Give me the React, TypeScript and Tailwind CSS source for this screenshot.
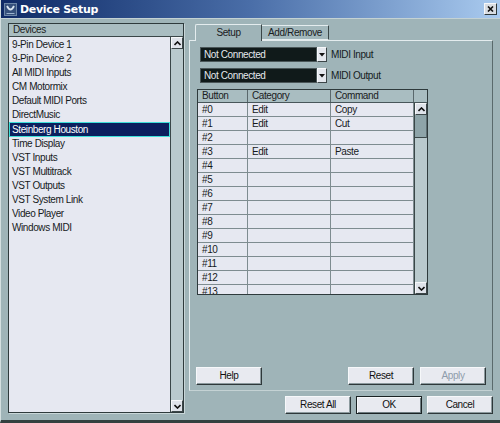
import React from 'react'

const DEVICES = [
  '9-Pin Device 1',
  '9-Pin Device 2',
  'All MIDI Inputs',
  'CM Motormix',
  'Default MIDI Ports',
  'DirectMusic',
  'Steinberg Houston',
  'Time Display',
  'VST Inputs',
  'VST Multitrack',
  'VST Outputs',
  'VST System Link',
  'Video Player',
  'Windows MIDI',
]

const ROWS: [string, string, string][] = [
  ['#0', 'Edit', 'Copy'],
  ['#1', 'Edit', 'Cut'],
  ['#2', '', ''],
  ['#3', 'Edit', 'Paste'],
  ['#4', '', ''],
  ['#5', '', ''],
  ['#6', '', ''],
  ['#7', '', ''],
  ['#8', '', ''],
  ['#9', '', ''],
  ['#10', '', ''],
  ['#11', '', ''],
  ['#12', '', ''],
  ['#13', '', ''],
]

function Chevron({ up }: { up?: boolean }) {
  return (
    <svg width="7" height="5" viewBox="0 0 7 5">
      <path d={up ? 'M0.5 4 L3.5 1 L6.5 4' : 'M0.5 1 L3.5 4 L6.5 1'} fill="none" stroke="#111" strokeWidth="1.6" />
    </svg>
  )
}

function ScrollButton({ up }: { up?: boolean }) {
  return (
    <div className="h-[12px] w-full flex items-center justify-center bg-[#dfe3ea] border border-t-[#f6f8fa] border-l-[#f6f8fa] border-r-[#3c4648] border-b-[#3c4648]">
      <Chevron up={up} />
    </div>
  )
}

function Btn({ label, disabled, primary }: { label: string; disabled?: boolean; primary?: boolean }) {
  return (
    <div
      className={`w-[66px] h-[18px] flex items-center justify-center bg-[#e8eaf0] border ${
        primary
          ? 'border-[#1a2224] shadow-[inset_1px_1px_0_#f6f8fa,inset_-1px_-1px_0_#6e7c80]'
          : 'border-t-[#f6f8fa] border-l-[#f6f8fa] border-r-[#2e383a] border-b-[#2e383a] shadow-[inset_-1px_-1px_0_#8c9a9e]'
      } ${disabled ? 'text-[#8e9cab]' : 'text-[#111]'}`}
    >
      {label}
    </div>
  )
}

function Dropdown({ label }: { label: string }) {
  return (
    <div className="flex items-center">
      <div className="w-[117px] h-[15px] bg-[#101a1a] text-[#e4e8ec] pl-[3px] flex items-center border border-[#4a5658]">
        Not Connected
      </div>
      <div className="w-[10px] h-[15px] bg-[#e4e8ee] flex items-center justify-center border border-t-[#f6f8fa] border-l-[#f6f8fa] border-r-[#3c4648] border-b-[#3c4648]">
        <svg width="6" height="4" viewBox="0 0 6 4">
          <path d="M0 0 H6 L3 3.5 Z" fill="#111" />
        </svg>
      </div>
      <span className="ml-[4px] text-[#141c1e]">{label}</span>
    </div>
  )
}

export default function App() {
  return (
    <div className="w-[500px] h-[423px] bg-[#9fb4b8] flex flex-col overflow-hidden font-['Liberation_Sans',Arial,sans-serif] text-[10px] tracking-[-0.4px] leading-none text-[#111] border-b-[3px] border-b-[#33403f] border-l border-l-[#d4dfe0]">
      {/* title bar */}
      <div className="h-[19px] flex items-center bg-gradient-to-r from-[#0f2a66] via-[#4a6ea8] to-[#aacbef] pl-[3px] pr-[3px] border-b border-b-[#c4d2d4]">
        <svg width="13" height="13" viewBox="0 0 13 13">
          <rect x="0" y="0" width="13" height="13" fill="#6d87a8" />
          <rect x="1" y="1" width="11" height="11" fill="#35507c" />
          <path d="M3 3 Q6.5 10 10 3" fill="none" stroke="#d8e4f0" strokeWidth="1.8" />
          <path d="M2.5 10.5 H10.5" stroke="#9bb3cf" strokeWidth="1" />
        </svg>
        <span className="ml-[3px] text-white font-bold text-[11px] font-['DejaVu_Sans',sans-serif] tracking-[-0.3px]">Device Setup</span>
        <div className="ml-auto w-[13px] h-[12px] bg-[#d9dde2] flex items-center justify-center border border-t-[#f6f8fa] border-l-[#f6f8fa] border-r-[#2e383a] border-b-[#2e383a]">
          <svg width="7" height="6" viewBox="0 0 7 6">
            <path d="M1 0.5 L6 5.5 M6 0.5 L1 5.5" stroke="#111" strokeWidth="1.6" />
          </svg>
        </div>
      </div>

      <div className="flex flex-1 pl-[7px] pt-[4px]">
        {/* devices list */}
        <div className="w-[176px] h-[390px] flex flex-col border border-[#2e3a3c] shadow-[1px_1px_0_#c8d6d8]">
          <div className="h-[13px] bg-[#a9bdc1] border-b border-b-[#3a4648] pl-[4px] flex items-center text-[#1a2022]">Devices</div>
          <div className="flex flex-1 min-h-0">
            <div className="flex-1 bg-[#e6e8f1] pt-[1px]">
              {DEVICES.map((d) =>
                d === 'Steinberg Houston' ? (
                  <div key={d} className="h-[15px] bg-[#0b1f5e] text-white border border-[#3ee0da] pl-[2px] flex items-center">
                    {d}
                  </div>
                ) : (
                  <div key={d} className="h-[14px] pl-[3px] flex items-center text-[#161a1c]">
                    {d}
                  </div>
                ),
              )}
            </div>
            <div className="w-[13px] bg-[#b9c9cd] border-l border-l-[#3a4648] flex flex-col justify-between">
              <ScrollButton up />
              <ScrollButton />
            </div>
          </div>
        </div>

        {/* right side */}
        <div className="ml-[5px] w-[304px] flex flex-col">
          <div className="flex pl-[6px] h-[17px] items-end">
            <div className="w-[67px] h-[17px] flex items-center justify-center border-t border-l border-t-[#e4ecee] border-l-[#e4ecee] border-r border-r-[#3a4648] rounded-tl-[2px] text-[#1a2022] relative top-[1px] bg-[#9fb4b8]">
              Setup
            </div>
            <div className="w-[67px] h-[15px] flex items-center justify-center border-t border-t-[#e4ecee] border-r border-r-[#3a4648] text-[#1a2022] bg-[#a3b8bc] border-b border-b-[#e4ecee]">
              Add/Remove
            </div>
          </div>
          <div className="h-[351px] border-t border-l border-t-[#e4ecee] border-l-[#e4ecee] border-r border-b border-r-[#5a6a6c] border-b-[#c4d2d4] flex flex-col pl-[10px] pr-[6px] pt-[6px]">
            <Dropdown label="MIDI Input" />
            <div className="mt-[6px]">
              <Dropdown label="MIDI Output" />
            </div>

            {/* table */}
            <div className="mt-[6px] -ml-[3px] w-[231px] h-[206px] border border-[#2e3a3c] flex flex-col overflow-hidden">
              <div className="h-[13px] flex bg-[#a9bdc1] border-b border-b-[#48565a] text-[#1a2022]">
                <div className="w-[50px] pl-[4px] flex items-center border-r border-r-[#5a686c]">Button</div>
                <div className="w-[83px] pl-[4px] flex items-center border-r border-r-[#5a686c]">Category</div>
                <div className="w-[83px] pl-[4px] flex items-center border-r border-r-[#5a686c]">Command</div>
                <div className="flex-1" />
              </div>
              <div className="flex flex-1 min-h-0">
                <div className="w-[216px] bg-[#e6e8f1] overflow-hidden">
                  {ROWS.map(([b, c, m]) => (
                    <div key={b} className="h-[14px] flex border-b border-b-[#7e8c90] shrink-0 text-[#161a1c]">
                      <div className="w-[50px] pl-[4px] flex items-center border-r border-r-[#7e8c90]">{b}</div>
                      <div className="w-[83px] pl-[4px] flex items-center border-r border-r-[#7e8c90]">{c}</div>
                      <div className="w-[83px] pl-[4px] flex items-center border-r border-r-[#7e8c90]">{m}</div>
                    </div>
                  ))}
                </div>
                <div className="flex-1 bg-[#b9c9cd] border-l border-l-[#3a4648] flex flex-col">
                  <ScrollButton up />
                  <div className="h-[23px] bg-[#8ea4a9] border-b border-b-[#3a4648] border-r border-r-[#5e6e72]" />
                  <div className="flex-1" />
                  <ScrollButton />
                </div>
              </div>
            </div>

            <div className="mt-auto mb-[5px] -ml-[4px] flex">
              <Btn label="Help" />
              <div className="ml-auto flex gap-[6px]">
                <Btn label="Reset" />
                <Btn label="Apply" disabled />
              </div>
            </div>
          </div>

          <div className="mt-[5px] flex justify-end gap-[5px]">
            <Btn label="Reset All" />
            <Btn label="OK" primary />
            <Btn label="Cancel" />
          </div>
        </div>
      </div>
    </div>
  )
}
